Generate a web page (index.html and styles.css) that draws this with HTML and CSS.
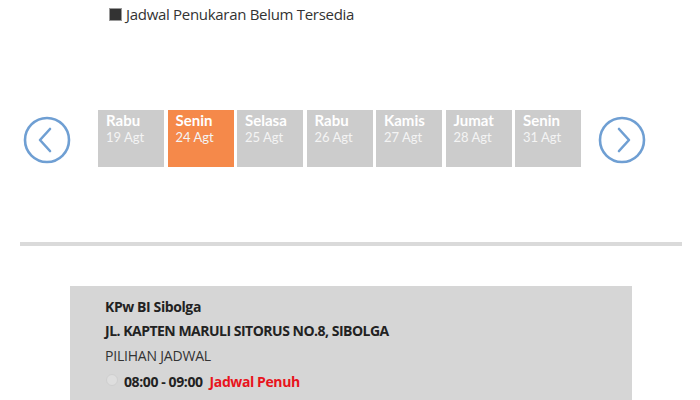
FILE: index.html
```html
<!DOCTYPE html>
<html>
<head>
<meta charset="utf-8">
<link rel="stylesheet" href="styles.css">
</head>
<body>
<div class="legend">
  <span class="legend-box"></span>
  <span class="legend-text">Jadwal Penukaran Belum Tersedia</span>
</div>
<div class="dates">
  <button class="arrow arrow-left" aria-label="prev">
    <svg width="48" height="48" viewBox="0 0 48 48"><circle cx="24" cy="24" r="22" fill="none" stroke="#6f9fd3" stroke-width="2.6"/><path d="M27 13 L17 24 L27 35" fill="none" stroke="#6f9fd3" stroke-width="2.6" stroke-linecap="round" stroke-linejoin="round"/></svg>
  </button>
  <div class="days">
    <div class="day"><div class="dname">Rabu</div><div class="ddate">19 Agt</div></div>
    <div class="day active"><div class="dname">Senin</div><div class="ddate">24 Agt</div></div>
    <div class="day"><div class="dname">Selasa</div><div class="ddate">25 Agt</div></div>
    <div class="day"><div class="dname">Rabu</div><div class="ddate">26 Agt</div></div>
    <div class="day"><div class="dname">Kamis</div><div class="ddate">27 Agt</div></div>
    <div class="day"><div class="dname">Jumat</div><div class="ddate">28 Agt</div></div>
    <div class="day"><div class="dname">Senin</div><div class="ddate">31 Agt</div></div>
  </div>
  <button class="arrow arrow-right" aria-label="next">
    <svg width="48" height="48" viewBox="0 0 48 48"><circle cx="24" cy="24" r="22" fill="none" stroke="#6f9fd3" stroke-width="2.6"/><path d="M21 13 L31 24 L21 35" fill="none" stroke="#6f9fd3" stroke-width="2.6" stroke-linecap="round" stroke-linejoin="round"/></svg>
  </button>
</div>
<div class="divider"></div>
<div class="card">
  <div class="office">KPw BI Sibolga</div>
  <div class="address">JL. KAPTEN MARULI SITORUS NO.8, SIBOLGA</div>
  <div class="label">PILIHAN JADWAL</div>
  <div class="slot"><span class="radio"></span><span class="time">08:00 - 09:00</span><span class="full">Jadwal Penuh</span></div>
</div>
</body>
</html>
```
FILE: styles.css
```css
html, body {
  margin: 0;
  padding: 0;
  background: #fff;
  width: 700px;
  height: 400px;
  overflow: hidden;
  font-family: "Open Sans", "Liberation Sans", sans-serif;
  color: #222;
}
.legend {
  display: flex;
  align-items: center;
  padding: 4px 0 0 109px;
  height: 20px;
}
.legend-box {
  width: 11px;
  height: 11px;
  background: #333;
  border: 1px solid #9a9a9a;
  margin-right: 4px;
}
.legend-text {
  font-size: 15px;
  letter-spacing: -0.3px;
  color: #333;
}
.dates {
  display: flex;
  align-items: center;
  margin-top: 86px;
  padding-left: 23px;
}
.arrow {
  background: none;
  border: 0;
  padding: 0;
  width: 48px;
  height: 48px;
  margin-top: 3px;
}
.arrow svg { display: block; }
.days {
  display: flex;
  gap: 3.5px;
  margin-left: 27px;
  margin-right: 17px;
}
.day {
  width: 66px;
  height: 57px;
  background: #cccccc;
  color: #fff;
  padding: 1px 0 0 8px;
  box-sizing: border-box;
  font-family: "Lato", "Open Sans", sans-serif;
}
.day.active { background: #f5894a; }
.dname {
  font-size: 15px;
  font-weight: 700;
  line-height: 18px;
}
.ddate {
  font-size: 13px;
  line-height: 16px;
  color: #f4f4f4;
}
.divider {
  height: 4px;
  background: #dadada;
  margin: 75px 18px 0 20px;
}
.card {
  margin: 40px 0 0 70px;
  width: 562px;
  height: 114px;
  background: #d6d6d6;
  padding: 9px 0 0 35px;
  box-sizing: border-box;
}
.office {
  font-size: 14px;
  font-weight: 700;
  line-height: 24px;
  letter-spacing: -0.4px;
}
.address {
  font-size: 14px;
  font-weight: 700;
  line-height: 24px;
  letter-spacing: -0.5px;
}
.label {
  font-size: 14px;
  line-height: 25px;
  color: #333;
  letter-spacing: -0.2px;
}
.slot {
  display: flex;
  align-items: center;
  margin-top: 4px;
  font-size: 14px;
  font-weight: 700;
  letter-spacing: -0.4px;
}
.radio {
  width: 10px;
  height: 10px;
  border-radius: 50%;
  background: #dedede;
  border: 1px solid #cfcfcf;
  margin: -4px 6px 0 1px;
}
.full {
  color: #e8141c;
  margin-left: 7px;
}
```
